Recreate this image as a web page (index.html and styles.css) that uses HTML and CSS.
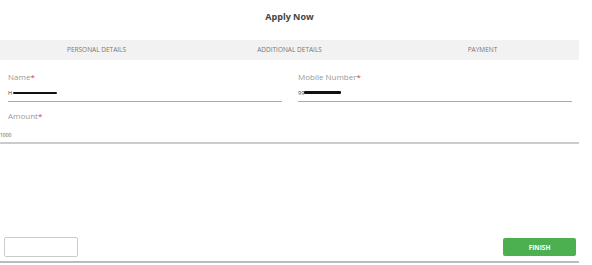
FILE: index.html
```html
<!DOCTYPE html>
<html lang="en">
  <head>
    <meta charset="UTF-8" />
    <meta name="viewport" content="width=device-width, initial-scale=1.0" />
    <title>Apply Now</title>
    <link rel="stylesheet" href="styles.css">
  </head>
  <body>
    <div class="wrap">
      <h2 class="title">Apply Now</h2>
      <div class="tabs">
        <div>PERSONAL DETAILS</div>
        <div>ADDITIONAL DETAILS</div>
        <div>PAYMENT</div>
      </div>
      <div class="row">
        <div class="field">
          <label>Name<span class="req">*</span></label>
          <div class="value">H<span class="mark name-mark"></span></div>
        </div>
        <div class="field">
          <label>Mobile Number<span class="req">*</span></label>
          <div class="value">99<span class="mark phone-mark"></span></div>
        </div>
      </div>
      <div class="amount">
        <label>Amount<span class="req">*</span></label>
        <div class="value">1000</div>
      </div>
      <div class="actions">
        <button class="back"></button>
        <button class="finish">FINISH</button>
      </div>
    </div>
  </body>
</html>
```

FILE: styles.css
```css
* {
  margin: 0;
  padding: 0;
  box-sizing: border-box;
  font-family: "Open Sans", "Liberation Sans", sans-serif;
}
body {
  background: #fff;
}
.wrap {
  width: 579px;
}
.title {
  height: 40px;
  line-height: 34px;
  text-align: center;
  font-size: 9px;
  font-weight: 700;
  color: #444;
}
.tabs {
  display: flex;
  height: 20px;
  background: #f2f2f2;
}
.tabs div {
  flex: 1;
  text-align: center;
  line-height: 20px;
  font-size: 6.5px;
  color: #777;
}
.row {
  display: grid;
  grid-template-columns: 274px 274px;
  gap: 16px;
  padding: 10px 7px 0 8px;
}
.field label,
.amount label {
  display: block;
  font-size: 8px;
  color: #999;
  line-height: 14px;
}
.req {
  color: #e53935;
}
.field .value {
  height: 18px;
  font-size: 5.5px;
  color: #444;
  border-bottom: 1px solid #aaa;
  display: flex;
  align-items: center;
}
.mark {
  display: inline-block;
  height: 2px;
  background: #111;
  border-radius: 1px;
}
.name-mark {
  width: 44px;
  margin-left: 1px;
}
.phone-mark {
  width: 37px;
  height: 3px;
}
.amount {
  margin-top: 7px;
}
.amount label {
  padding-left: 8px;
}
.amount .value {
  height: 21px;
  padding-top: 5px;
  display: flex;
  align-items: center;
  font-size: 5px;
  color: #555;
  border-bottom: 2px solid #ccc;
}
.actions {
  display: flex;
  justify-content: space-between;
  align-items: center;
  margin-top: 93px;
  padding: 0 3px 4px 4px;
  border-bottom: 2px solid #bbb;
}
.back {
  width: 74px;
  height: 20px;
  background: #fff;
  border: 1px solid #ccc;
  border-radius: 2px;
}
.finish {
  width: 73px;
  height: 18px;
  background: #4caf50;
  color: #fff;
  border: none;
  border-radius: 2px;
  font-size: 6.5px;
  font-weight: 700;
}
```
